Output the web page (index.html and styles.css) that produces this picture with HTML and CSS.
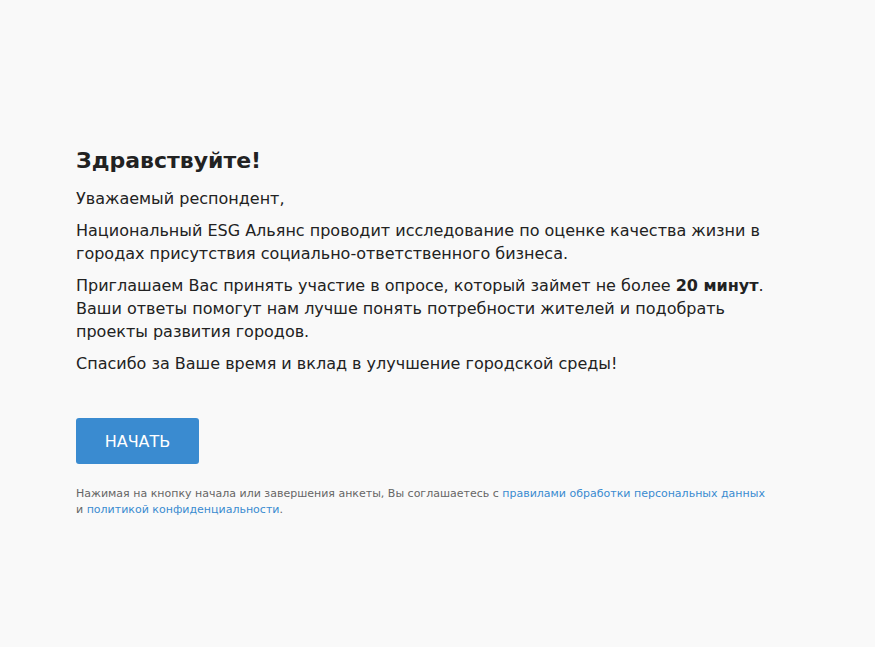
FILE: index.html
```html
<!DOCTYPE html>
<html lang="ru">
  <head>
    <title>Опрос</title>
    <link rel="stylesheet" href="styles.css">
  </head>
  <body>
    <div class="container">
      <div class="intro">
        <h1>Здравствуйте!</h1>
        <p>Уважаемый респондент,</p>
        <p>Национальный ESG Альянс проводит исследование по оценке качества жизни в городах присутствия социально-ответственного бизнеса.</p>
        <p>Приглашаем Вас принять участие в опросе, который займет не более <b>20&nbsp;минут</b>. Ваши ответы помогут нам лучше понять потребности жителей и подобрать проекты развития городов.</p>
        <p>Спасибо за Ваше время и вклад в улучшение городской среды!</p>
      </div>
      <div class="start">
        <button class="startBtn">НАЧАТЬ</button>
      </div>
      <div class="agree">
        Нажимая на кнопку начала или завершения анкеты, Вы соглашаетесь с <a href="#">правилами обработки персональных данных</a> и <a href="#">политикой конфиденциальности</a>.
      </div>
    </div>
  </body>
</html>
```

FILE: styles.css
```css
body {
  margin: 0;
  background-color: #f9f9f9;
  font-family: "DejaVu Sans", "Noto Sans", sans-serif;
  color: #222;
}
.container {
  width: 723px;
  margin: 0 auto;
  padding-top: 145px;
}
.intro h1 {
  font-size: 22px;
  font-weight: 700;
  margin: 0 0 10px 0;
  line-height: 32px;
}
.intro p {
  font-size: 16px;
  line-height: 23px;
  margin: 0 0 9px 0;
}
.intro b {
  font-weight: 700;
}
.start {
  margin-top: 43px;
}
.startBtn {
  width: 123px;
  height: 46px;
  border: none;
  border-radius: 3px;
  background-color: #3a8bd0;
  color: #fff;
  font-family: inherit;
  font-size: 16px;
  font-weight: 500;
  cursor: pointer;
}
.agree {
  max-width: 692px;
  margin-top: 22px;
  font-size: 11px;
  line-height: 16px;
  color: #666;
}
.agree a {
  color: #3a8bd0;
  text-decoration: none;
}
```
